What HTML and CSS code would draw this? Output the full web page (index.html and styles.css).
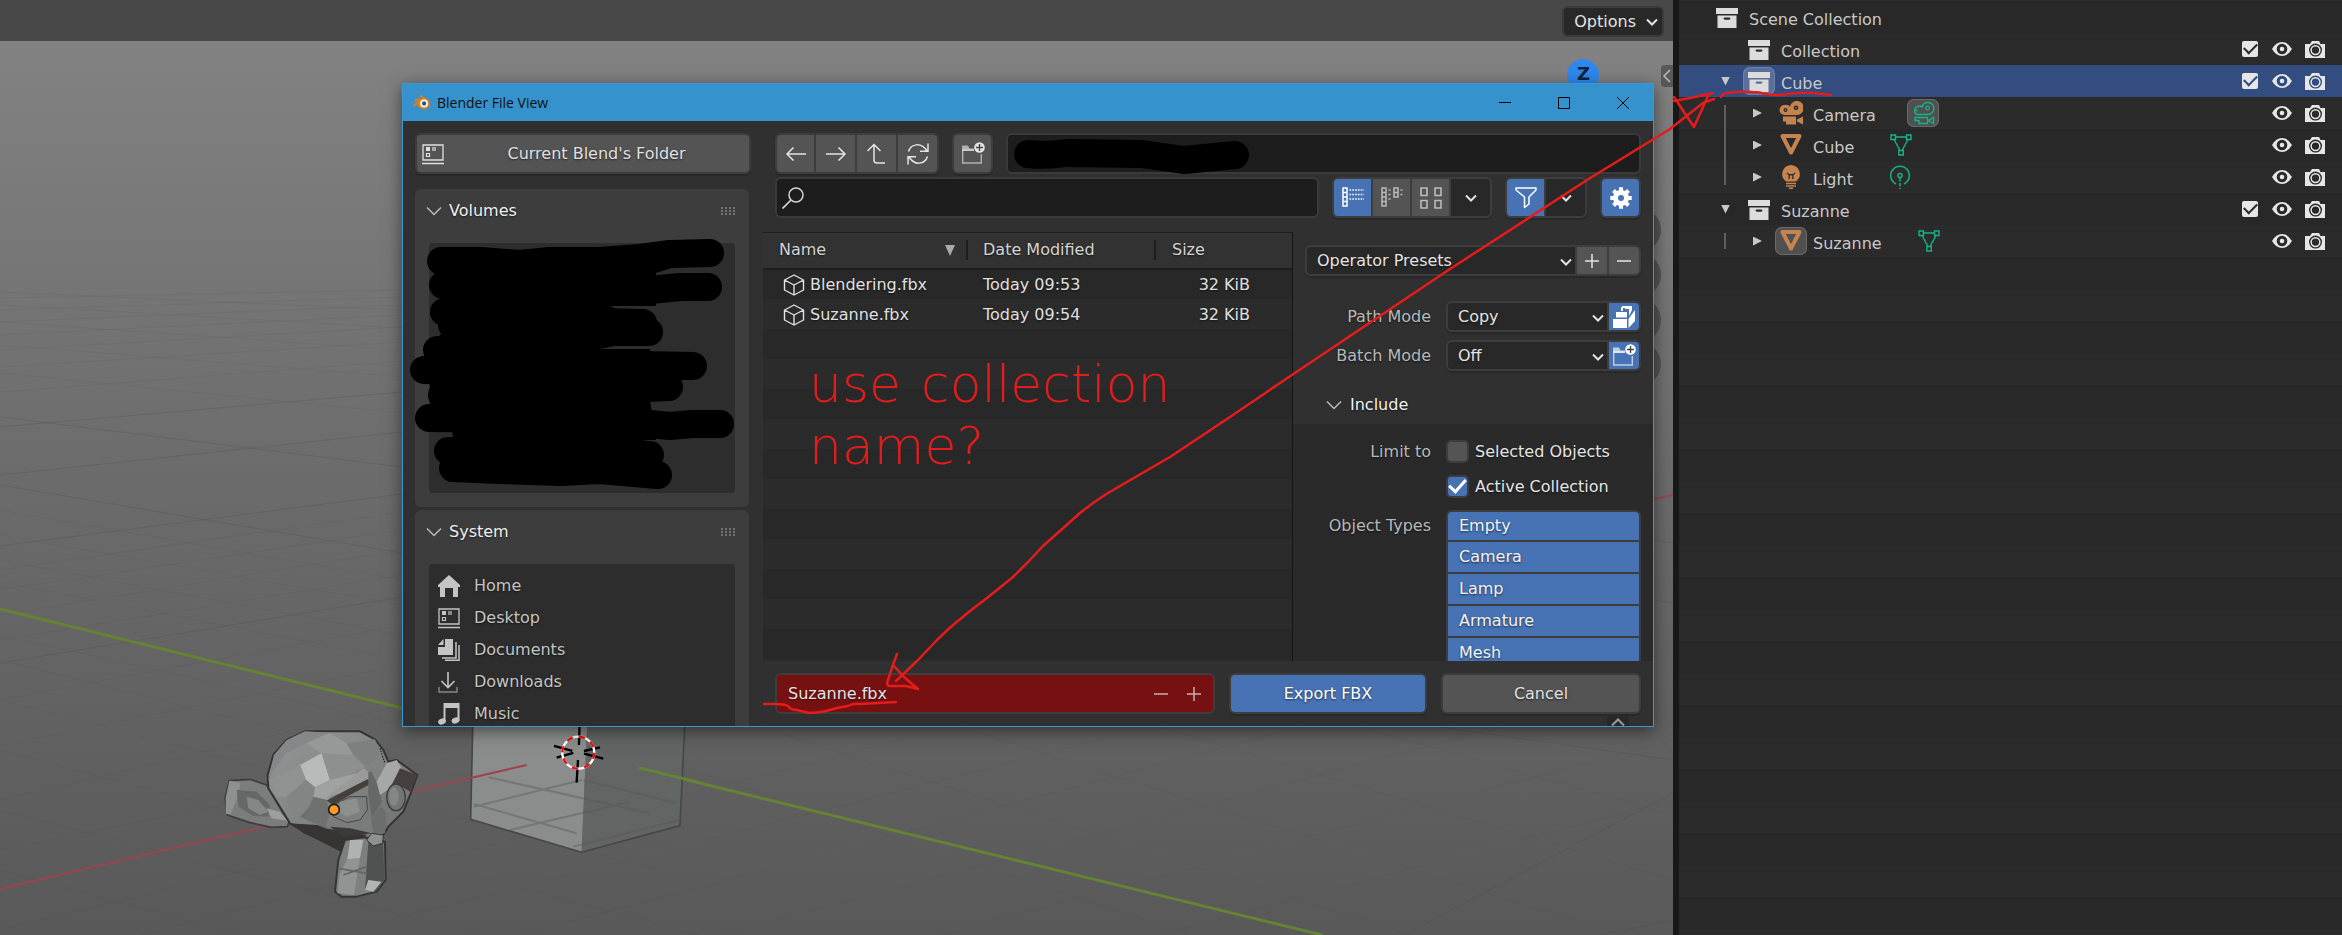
FILE: index.html
```html
<!DOCTYPE html>
<html lang="en">
<head>
<meta charset="utf-8">
<title>Blender</title>
<link rel="stylesheet" href="styles.css">
</head>
<body>
<svg class="defs" aria-hidden="true">
  <symbol id="i-chevron" viewBox="0 0 16 16"><path d="M3 5.500l5 5 5-5" fill="none" stroke="currentColor" stroke-width="2"/></symbol>
  <symbol id="i-fold" viewBox="0 0 16 16"><path d="M1 4.500l7 7 7-7" fill="none" stroke="currentColor" stroke-width="1.500"/></symbol>
  <symbol id="i-grip" viewBox="0 0 16 8"><path d="M1 1h2M5 1h2M9 1h2M13 1h2M1 4h2M5 4h2M9 4h2M13 4h2M1 7h2M5 7h2M9 7h2M13 7h2" stroke="currentColor" stroke-width="1"/></symbol>
  <symbol id="i-desktop" viewBox="0 0 22 22"><path d="M1 2h20v15H1zM0 20.500h22" fill="none" stroke="currentColor" stroke-width="1.300"/><path d="M4 4h4v4H4z" fill="currentColor"/><path d="M10 4h4v4h-4z" fill="currentColor" opacity=".6"/><path d="M4.500 10.500h3v3h-3z" fill="none" stroke="currentColor" stroke-width="1.200"/></symbol>
  <symbol id="i-home" viewBox="0 0 22 22"><path d="M11 0L0 10v2h2v10h5v-9h8v9h5V12h2v-2z" fill="currentColor"/></symbol>
  <symbol id="i-docs" viewBox="0 0 22 22"><path d="M7 0h8v16H0V8h7zM5.500 0v6H0z" fill="currentColor"/><path d="M18 3v16H4M21 6v15.300H7" fill="none" stroke="currentColor" stroke-width="1.500"/></symbol>
  <symbol id="i-download" viewBox="0 0 22 22"><path d="M10 1v15M3.500 10l6.500 6.500 6.500-6.500" fill="none" stroke="currentColor" stroke-width="1.600"/><path d="M1 16v5h18v-5" fill="none" stroke="currentColor" stroke-width="1.400" opacity=".6"/></symbol>
  <symbol id="i-music" viewBox="0 0 22 22"><path d="M5.500 0h16v18h-2V5h-12v13h-2z" fill="currentColor"/><ellipse cx="4" cy="18.500" rx="4" ry="3" fill="currentColor" transform="rotate(-20 4 18.500)"/><ellipse cx="17.500" cy="17.500" rx="4" ry="3" fill="currentColor" transform="rotate(-20 17.500 17.500)"/></symbol>
  <symbol id="i-back" viewBox="0 0 22 22"><path d="M21 11H2M8.500 4.500L2 11l6.500 6.500" fill="none" stroke="currentColor" stroke-width="1.500"/></symbol>
  <symbol id="i-forward" viewBox="0 0 22 22"><path d="M1 11h19M13.500 4.500L20 11l-6.500 6.500" fill="none" stroke="currentColor" stroke-width="1.500"/></symbol>
  <symbol id="i-parent" viewBox="0 0 22 22"><path d="M1.500 8L8 1.500 14.500 8M8 1.500V17q0 3 3 3h8" fill="none" stroke="currentColor" stroke-width="1.500"/></symbol>
  <symbol id="i-refresh" viewBox="0 0 22 22"><path d="M1.500 8.500C4 1 14-1.500 20 8M21 .500V8.300h-8M20.500 13.500C18 21 8 23.500 2 14M1 21.500V13.700h8" fill="none" stroke="currentColor" stroke-width="1.500"/></symbol>
  <symbol id="i-newfolder" viewBox="0 0 24 24"><path d="M1 8h12M1.700 8v13h18.600V12" fill="none" stroke="currentColor" stroke-width="1.400" opacity=".65"/><path d="M1 3.500h6l1.500 3H13V9H1z" fill="currentColor" opacity=".65"/><circle cx="18.500" cy="5.500" r="5.300" fill="currentColor"/><path d="M18.500 2v7M15 5.500h7" stroke="#444" stroke-width="1.400"/></symbol>
  <symbol id="i-search" viewBox="0 0 22 22"><circle cx="14" cy="8" r="7" fill="none" stroke="currentColor" stroke-width="1.500"/><path d="M9 13l-8.500 8.500" stroke="currentColor" stroke-width="1.700"/></symbol>
  <symbol id="i-vlist" viewBox="0 0 22 22"><path d="M1 1h4v4.500H1zM1 5.500h4V10H1zM1 10h4v4.500H1zM1 14.500h4v4.500H1z" fill="none" stroke="currentColor" stroke-width="1.500"/><path d="M7.500 3H22M7.500 7.500H22M7.500 12H22" stroke="currentColor" stroke-width="1.500" stroke-dasharray="1.600 1.200"/></symbol>
  <symbol id="i-hlist" viewBox="0 0 22 22"><path d="M1 1h4v4.500H1zM1 5.500h4V10H1zM1 10h4v4.500H1zM1 14.500h4v4.500H1zM13 1h4v4.500h-4zM13 5.500h4V10h-4z" fill="none" stroke="currentColor" stroke-width="1.500"/><path d="M7.500 3h2M7.500 7.500h2M7.500 12h2M19.500 3h2M19.500 7.500h2" stroke="currentColor" stroke-width="1.500"/></symbol>
  <symbol id="i-thumbs" viewBox="0 0 22 22"><path d="M1 1h6v7.500H1zM15 1h6v7.500h-6zM1 13.500h6V21H1zM15 13.500h6V21h-6z" fill="none" stroke="currentColor" stroke-width="1.600"/></symbol>
  <symbol id="i-filter" viewBox="0 0 22 22"><path d="M1 1h20v2l-7 7v7l-4.500 3.500V10L1 3z" fill="none" stroke="currentColor" stroke-width="1.500" stroke-linejoin="round"/></symbol>
  <symbol id="i-gear" viewBox="0 0 22 22"><circle cx="11" cy="11" r="5.500" fill="none" stroke="currentColor" stroke-width="5"/><path d="M11 .300v4M11 17.700v4M.300 11h4M17.700 11h4M3.500 3.500l3 3M15.500 15.500l3 3M18.500 3.500l-3 3M6.500 15.500l-3 3" stroke="currentColor" stroke-width="4"/></symbol>
  <symbol id="i-cube" viewBox="0 0 22 22"><path d="M11 1l9.500 5v10L11 21l-9.500-5V6zM1.500 6l9.500 5 9.500-5M11 11v10" fill="none" stroke="currentColor" stroke-width="1.400" stroke-linejoin="round"/></symbol>
  <symbol id="i-pack" viewBox="0 0 22 22"><path d="M0 13h14v9H0zM3 6h11v5.500H3zM9 0h10v2H9zM8 1h2v4H8zM15.500 13L22 4v11l-6.500 7zM19 0v4l-3 6V3h-4V1z" fill="currentColor"/></symbol>
  <symbol id="i-plus" viewBox="0 0 16 16"><path d="M8 1v14M1 8h14" stroke="currentColor" stroke-width="1.500"/></symbol>
  <symbol id="i-minus" viewBox="0 0 16 16"><path d="M1 8h14" stroke="currentColor" stroke-width="1.500"/></symbol>
  <symbol id="i-collection" viewBox="0 0 22 20"><path d="M0 0h22v6H0z" fill="currentColor"/><path fill-rule="evenodd" d="M1.500 7.500h19V20h-19zM9 9.500q-1.500 0-1.500 1t1.500 1.200h4q1.500-.200 1.500-1.200t-1.500-1z" fill="currentColor"/></symbol>
  <symbol id="i-camera" viewBox="0 0 24 24"><path fill-rule="evenodd" d="M5.500 4A5 5 0 0 0 5.500 14H18a7 7 0 1 0-7-8.500A5 5 0 0 0 5.500 4zM6.500 7a2 2 0 1 1 0 4 2 2 0 0 1 0-4zM17 4.500a2.300 2.300 0 1 1 0 4.600 2.300 2.300 0 0 1 0-4.600z" fill="currentColor"/><circle cx="6.500" cy="9" r=".8" fill="currentColor"/><circle cx="17" cy="6.800" r=".8" fill="currentColor"/><path d="M4 15.500h13v8H7v-3H4zM18 18.500l6-3v8l-6-3z" fill="currentColor"/></symbol>
  <symbol id="i-camdata" viewBox="0 0 24 24"><path d="M5.500 13.500H17a6 6 0 1 0-6-7.500 4.500 4.500 0 1 0-5.500 7.500z" fill="none" stroke="currentColor" stroke-width="1.500"/><circle cx="16.500" cy="7" r="1.800" fill="none" stroke="currentColor" stroke-width="1.200"/><circle cx="6" cy="9.500" r="1" fill="currentColor"/><path d="M4 16.500h12.500v6H8v-3H4zM17.500 19.500l5-3v6z" fill="none" stroke="currentColor" stroke-width="1.400"/></symbol>
  <symbol id="i-mesh" viewBox="0 0 22 22"><path d="M2.500 2h17L11 18.500z" fill="none" stroke="currentColor" stroke-width="4" stroke-linejoin="round"/></symbol>
  <symbol id="i-meshdata" viewBox="0 0 22 22"><path d="M1 1h4.500v4.500H1zM16.500 1H21v4.500h-4.500zM8.800 16.500h4.500V21H8.800zM5.500 3h11M4 5.500l6 11M18 5.500l-6 11" fill="none" stroke="currentColor" stroke-width="1.400"/></symbol>
  <symbol id="i-light" viewBox="0 0 20 24"><path fill-rule="evenodd" d="M10 0a9 9 0 0 1 6.500 15l-1.500 1.500H5L3.500 15A9 9 0 0 1 10 0zM5.500 8.500l2 1.500v4h1.300v-3.500h2.400V14h1.300v-4l2-1.500-.7-1-2 1.600H8.200l-2-1.600z" fill="currentColor"/><path d="M5 18.500h10M5 21h10M8 23.200h4" stroke="currentColor" stroke-width="1.500"/></symbol>
  <symbol id="i-lightdata" viewBox="0 0 22 24"><path d="M7 19A9.300 9.300 0 1 1 15 19" fill="none" stroke="currentColor" stroke-width="1.500"/><circle cx="11" cy="10.500" r="2" fill="none" stroke="currentColor" stroke-width="1.500"/><path d="M11 13v11" stroke="currentColor" stroke-width="1.500" stroke-dasharray="3.500 1.500"/></symbol>
  <symbol id="i-eye" viewBox="0 0 20 14"><path fill-rule="evenodd" d="M0 7Q4 0 10 0t10 7q-4 7-10 7T0 7zM10 1.700a5.300 5.300 0 1 0 0 10.600 5.300 5.300 0 0 0 0-10.600zM10 4.700a2.300 2.300 0 1 1 0 4.600 2.300 2.300 0 0 1 0-4.600z" fill="currentColor"/></symbol>
  <symbol id="i-photo" viewBox="0 0 20 17"><path fill-rule="evenodd" d="M0 3h5l2-3h7l1.500 3H20v14H0zM10.500 2.600a6.500 6.500 0 1 0 0 13 6.500 6.500 0 0 0 0-13z" fill="currentColor"/><circle cx="10.500" cy="9.100" r="4.400" fill="none" stroke="currentColor" stroke-width="1.500"/></symbol>
  <symbol id="i-blender" viewBox="0 0 20 16"><path d="M1 11.500l9-7M3 5h9M8.500.800L16 6" stroke="#e87d0d" stroke-width="2.200" stroke-linecap="round"/><ellipse cx="12" cy="9.300" rx="7" ry="6.200" fill="#e87d0d"/><circle cx="12.300" cy="9.100" r="4.300" fill="#fff"/><circle cx="12.300" cy="9.100" r="2.400" fill="#265787"/></symbol>
</svg>

<main class="app">
  <section class="viewport" aria-label="3D Viewport">
    <header class="viewbar"><button class="options" type="button">Options <svg class="chev"><use href="#i-chevron"/></svg></button></header>
    <svg class="scene" viewBox="0 41 1673 894" preserveAspectRatio="none" aria-hidden="true">
      <defs>
        <linearGradient id="sky" x1="0" y1="0" x2="0" y2="1"><stop offset="0" stop-color="#828282"/><stop offset=".5" stop-color="#6b6b6b"/><stop offset="1" stop-color="#595959"/></linearGradient>
        <linearGradient id="head" x1="0" y1="0" x2="1" y2="1"><stop offset="0" stop-color="#969898"/><stop offset="1" stop-color="#6c6e6e"/></linearGradient>
      </defs>
      <rect y="41" width="1673" height="894" fill="url(#sky)"/>
      <g fill="none" stroke="#4c4c4c" stroke-opacity=".25" stroke-width="1">
        <path d="M0 663L402 597M0 546L402 494M0 475L402 432M0 427L402 392M0 485L402 553M0 417L402 467"/>
        <path d="M1404 935L1673 793M1440 727L1673 760M1600 935L1673 920M1654 540L1673 543M1654 600L1673 603"/>
      </g>
      <g fill="none" stroke="#4c4c4c" stroke-opacity=".1" stroke-width="1">
        <path d="M0 392L402 361M0 367L402 342M0 373L402 413M0 345L402 377M0 350L402 327M0 335L402 315M0 322L402 305M0 310L402 297M0 322L402 350M0 305L402 328M0 292L402 310M0 298L402 290"/>
        <path d="M0 560L402 635M0 582L402 660M0 535L402 605M0 510L402 580M0 635L402 725M0 660L560 800M0 700L660 870M0 750L700 935M0 810L480 935M0 870L240 935M0 640L402 575M0 615L402 550M0 590L402 530M0 570L402 512M0 700L402 625M0 745L402 665M0 800L402 705M0 850L640 720M0 930L700 760M140 935L900 740M330 935L1100 740M520 935L1300 727M720 935L1500 727M940 935L1673 740M1160 935L1673 800M560 727L1190 935M760 727L1410 935M960 727L1620 935M1160 727L1673 880M1360 727L1673 815"/>
      </g>
      <path d="M0 889L525 765M1654 499L1673 495" stroke="#9b4450" stroke-width="2" fill="none"/>
      <path d="M0 609L402 708M638 768L1322 935" stroke="#648334" stroke-width="3" fill="none"/>
      <g transform="translate(200 700) scale(.3333)" stroke-linejoin="round">
        <path d="M822 0L812 358 1145 457 1165 0z" fill="#8b8d8c"/>
        <path d="M1165 0L1145 457 1440 377 1460 0z" fill="#636564"/>
        <path d="M820 0L812 358 1145 457 1440 377 1458 0" fill="none" stroke="#474747" stroke-width="5"/>
        <path d="M822 312L1130 400M866 232L1350 340M822 320L1145 240M930 390L1290 305M1120 440L1440 360M1150 240L1430 310" stroke="#565656" stroke-opacity=".4" stroke-width="6" fill="none"/>
        <path d="M812 234L980 195" stroke="#9b4450" stroke-width="6"/>
        <path d="M1315 203L1500 248" stroke="#648334" stroke-width="8"/>
        <path d="M1139 70L1137 135M1134 180L1130 248M1062 138L1117 153M1070 173L1120 159M1152 153L1200 142M1152 161L1210 176" stroke="#000" stroke-width="7"/>
        <circle cx="1135" cy="158" r="48" fill="none" stroke="#fff" stroke-width="7"/>
        <circle cx="1135" cy="158" r="48" fill="none" stroke="#f00c0c" stroke-width="7" stroke-dasharray="19 18.700"/>

        <g stroke="none">
          <path d="M88 242L150 238 200 255 250 340 268 365 262 380 215 382 150 368 82 345 75 295z" fill="#7b7d7d" stroke="#3c3c3c" stroke-width="5"/>
          <path d="M88 242L122 250 110 300 92 342 78 342 77 295z" fill="#8f9191"/>
          <path d="M110 270L170 275 210 315 205 350 160 348 115 320z" fill="#666868"/>
          <path d="M140 290L175 300 205 335 180 345 145 325z" fill="#858787"/>
          <path d="M200 325L240 335 262 362 215 355z" fill="#9c9e9e"/>
          <path d="M315 94L480 94 525 118 550 150 565 185 590 180 652 225 632 280 610 335 565 380 550 405 420 450 340 410 270 370 205 265 203 225 220 165 260 120z" fill="url(#head)" stroke="#333" stroke-width="6"/>
          <path d="M270 370L350 375 470 400 500 405 480 430 420 450 380 430 310 400z" fill="#373534"/>
          <path d="M315 94L390 98 320 130 260 160 222 210 205 240 222 165 260 120z" fill="#858888"/>
          <path d="M390 98L440 130 460 165 370 165 320 130z" fill="#979999"/>
          <path d="M440 130L525 118 540 160 505 200 460 165z" fill="#7e8080"/>
          <path d="M300 195L365 160 390 240 345 262 318 240z" fill="#b8baba"/>
          <path d="M365 160L460 165 495 200 450 225 390 240z" fill="#8e9090"/>
          <path d="M205 240L300 195 318 240 260 290 230 290z" fill="#909292"/>
          <path d="M260 290L318 240 345 262 328 320 300 350 270 345z" fill="#838585"/>
          <path d="M345 262L390 240 450 225 485 215 380 300 340 290z" fill="#a0a2a2"/>
          <path d="M328 320L340 290 380 300 390 340 375 385 300 350z" fill="#6f7171"/>
          <path d="M380 302L500 235 515 250 450 285 400 315z" fill="#46403d"/>
          <path d="M370 298L490 205 512 220 508 235 420 280z" fill="#999b9b"/>
          <path d="M505 215L515 215 540 270 545 310 515 350 505 285z" fill="#666868"/>
          <path d="M560 190L590 180 605 205 570 265 540 285 530 245z" fill="#a6a8a8"/>
          <path d="M600 205L652 225 630 275 590 250 570 265z" fill="#45403d"/>
          <ellipse cx="588" cy="292" rx="28" ry="40" fill="#737575" stroke="#3b3b3b" stroke-width="4"/>
          <ellipse cx="582" cy="290" rx="14" ry="28" fill="#858787"/>
          <path d="M400 315L450 290 500 290 502 330 480 360 440 368 400 350z" fill="#7d7f7f" stroke="#444" stroke-width="3"/>
          <path d="M420 305L470 295 480 335 440 350 415 335z" fill="#8d8f8f"/>
          <path d="M375 385L400 352 445 372 480 362 515 345 520 400 470 400z" fill="#7a7c7c"/>
          <path d="M390 380L450 385 515 400 430 410z" fill="#3c3a39"/>
          <path d="M520 400L512 345 545 320 560 340 555 400z" fill="#6c6e6e"/>
          <path d="M435 420L490 412 555 425 557 540 530 575 470 590 425 590 405 575 415 480z" fill="#7d7f7f" stroke="#343434" stroke-width="6"/>
          <path d="M450 420L490 420 480 475 442 478z" fill="#b0b2b2"/>
          <path d="M442 478L480 475 462 585 412 580 420 520z" fill="#929494"/>
          <path d="M505 425L550 425 553 540 525 575 495 570z" fill="#505252"/>
          <path d="M495 570L505 540 545 545 520 575z" fill="#b2b4b4"/>
          <path d="M500 420L515 400 550 405 548 430 520 438z" fill="#8f9191" stroke="#333" stroke-width="3"/>
          <path d="M415 505L500 520M430 525L500 500" stroke="#666" stroke-width="5"/>
          <path d="M540 145L555 190" stroke="#222" stroke-width="4" stroke-dasharray="4 4"/>
        </g>
        <circle cx="402" cy="329" r="16" fill="#ff9a26" stroke="#1c1c1c" stroke-width="5"/>
      </g>
      <g fill="#555"><circle cx="1639" cy="230" r="22"/><circle cx="1639" cy="275" r="22"/><circle cx="1639" cy="320" r="22"/><circle cx="1639" cy="364" r="22"/></g>
      <circle cx="1583" cy="75" r="16" fill="#2f88ee"/>
    </svg>
    <span class="axis-z">Z</span>
    <button class="side-tab" type="button" aria-label="Show sidebar"><svg viewBox="0 0 12 22"><path d="M9 5l-6 6 6 6" fill="none" stroke="#bbb" stroke-width="1.500"/></svg></button>

    <section class="dialog" role="dialog" aria-label="Blender File View">
      <header class="titlebar">
        <svg class="logo"><use href="#i-blender"/></svg>
        <h1>Blender File View</h1>
        <button type="button" aria-label="Minimize"><svg viewBox="0 0 12 12"><path d="M0 5.500h12" stroke="#000"/></svg></button>
        <button type="button" aria-label="Maximize"><svg viewBox="0 0 12 12"><path d="M.500 .500h11v11H.500z" fill="none" stroke="#000"/></svg></button>
        <button type="button" aria-label="Close"><svg viewBox="0 0 12 12"><path d="M0 0l12 12M12 0L0 12" stroke="#000"/></svg></button>
      </header>
      <div class="body">
        <aside class="sidebar">
          <button class="btn folder" type="button"><svg class="ic"><use href="#i-desktop"/></svg><span>Current Blend's Folder</span></button>
          <section class="panel">
            <h2><svg class="fold"><use href="#i-fold"/></svg>Volumes<svg class="grip"><use href="#i-grip"/></svg></h2>
            <ul class="places volumes"></ul>
          </section>
          <section class="panel">
            <h2><svg class="fold"><use href="#i-fold"/></svg>System<svg class="grip"><use href="#i-grip"/></svg></h2>
            <ul class="places">
              <li><svg class="ic"><use href="#i-home"/></svg>Home</li>
              <li><svg class="ic"><use href="#i-desktop"/></svg>Desktop</li>
              <li><svg class="ic"><use href="#i-docs"/></svg>Documents</li>
              <li><svg class="ic"><use href="#i-download"/></svg>Downloads</li>
              <li><svg class="ic"><use href="#i-music"/></svg>Music</li>
            </ul>
          </section>
        </aside>
        <div class="main">
          <div class="toolbar">
            <div class="bar">
              <div class="group wide">
                <button type="button" aria-label="Back"><svg class="ic"><use href="#i-back"/></svg></button>
                <button type="button" aria-label="Forward"><svg class="ic"><use href="#i-forward"/></svg></button>
                <button type="button" aria-label="Parent directory"><svg class="ic"><use href="#i-parent"/></svg></button>
                <button type="button" aria-label="Refresh"><svg class="ic"><use href="#i-refresh"/></svg></button>
              </div>
              <div class="group"><button type="button" aria-label="New folder"><svg class="ic big"><use href="#i-newfolder"/></svg></button></div>
              <input class="field grow" type="text" aria-label="Path">
            </div>
            <div class="bar">
              <label class="field grow search"><svg class="ic"><use href="#i-search"/></svg><input type="text" aria-label="Search"></label>
              <div class="group dim">
                <button class="on" type="button" aria-label="Vertical list"><svg class="ic"><use href="#i-vlist"/></svg></button>
                <button type="button" aria-label="Horizontal list"><svg class="ic"><use href="#i-hlist"/></svg></button>
                <button type="button" aria-label="Thumbnails"><svg class="ic"><use href="#i-thumbs"/></svg></button>
                <button class="dark" type="button" aria-label="Display settings"><svg class="chev"><use href="#i-chevron"/></svg></button>
              </div>
              <div class="group">
                <button class="on" type="button" aria-label="Filter"><svg class="ic"><use href="#i-filter"/></svg></button>
                <button class="dark" type="button" aria-label="Filter settings"><svg class="chev"><use href="#i-chevron"/></svg></button>
              </div>
              <div class="group"><button class="on" type="button" aria-label="Options panel"><svg class="ic"><use href="#i-gear"/></svg></button></div>
            </div>
          </div>
          <div class="split">
            <div class="files">
              <table>
                <thead><tr><th class="c-name"><div>Name <svg viewBox="0 0 10 11"><path d="M0 0h10L5 11z" fill="#aaa"/></svg></div></th><th class="c-date"><div>Date Modified</div></th><th class="c-size"><div>Size</div></th></tr></thead>
                <tbody>
                  <tr><td><svg class="ic"><use href="#i-cube"/></svg>Blendering.fbx</td><td>Today 09:53</td><td>32 KiB</td></tr>
                  <tr><td><svg class="ic"><use href="#i-cube"/></svg>Suzanne.fbx</td><td>Today 09:54</td><td>32 KiB</td></tr>
                </tbody>
              </table>
            </div>
            <div class="params">
              <div class="top">
                <div class="combo presets"><span class="sel"><select aria-label="Operator Presets"><option>Operator Presets</option></select><svg class="chev"><use href="#i-chevron"/></svg></span><button type="button" aria-label="Add preset"><svg class="sm"><use href="#i-plus"/></svg></button><button type="button" aria-label="Remove preset"><svg class="sm"><use href="#i-minus"/></svg></button></div>
                <div class="prop"><label for="pm">Path Mode</label><div class="combo"><span class="sel"><select id="pm"><option>Copy</option></select><svg class="chev"><use href="#i-chevron"/></svg></span><button class="on" type="button" aria-label="Embed textures"><svg class="ic"><use href="#i-pack"/></svg></button></div></div>
                <div class="prop"><label for="bm">Batch Mode</label><div class="combo"><span class="sel"><select id="bm"><option>Off</option></select><svg class="chev"><use href="#i-chevron"/></svg></span><button class="on" type="button" aria-label="Batch own directory"><svg class="ic big"><use href="#i-newfolder"/></svg></button></div></div>
              </div>
              <h2 class="sub"><svg class="fold"><use href="#i-fold"/></svg>Include</h2>
              <div class="include">
                <div class="prop"><span>Limit to</span><label class="check"><input type="checkbox">Selected Objects</label></div>
                <div class="prop"><span></span><label class="check"><input type="checkbox" checked>Active Collection</label></div>
                <div class="prop types"><span>Object Types</span><div class="stack">
                  <button type="button" aria-pressed="true">Empty</button><button type="button" aria-pressed="true">Camera</button><button type="button" aria-pressed="true">Lamp</button><button type="button" aria-pressed="true">Armature</button><button type="button" aria-pressed="true">Mesh</button>
                </div></div>
              </div>
            </div>
          </div>
          <footer class="execute">
            <div class="filename"><input type="text" value="Suzanne.fbx" aria-label="File name"><button type="button" aria-label="Decrement"><svg class="sm"><use href="#i-minus"/></svg></button><button type="button" aria-label="Increment"><svg class="sm"><use href="#i-plus"/></svg></button></div>
            <button class="btn primary" type="button">Export FBX</button>
            <button class="btn cancel" type="button">Cancel</button>
            <span class="region-tab"><svg viewBox="0 0 14 8"><path d="M1 7.500l6-6 6 6" fill="none" stroke="#999" stroke-width="2"/></svg></span>
          </footer>
        </div>
      </div>
    </section>
  </section>
  <div class="divider"></div>
  <aside class="outliner" aria-label="Outliner">
    <ul>
      <li><div class="row l0"><span class="tri"></span><span class="obj"><svg class="coll"><use href="#i-collection"/></svg></span><span class="name">Scene Collection</span></div></li>
      <li><div class="row l1"><span class="tri"></span><span class="obj"><svg class="coll"><use href="#i-collection"/></svg></span><span class="name">Collection</span><span class="toggles"><input type="checkbox" checked aria-label="Include Collection"><svg class="eye"><use href="#i-eye"/></svg><svg class="photo"><use href="#i-photo"/></svg></span></div></li>
      <li><div class="row l1 selected"><span class="tri down"></span><span class="obj active"><svg class="coll"><use href="#i-collection"/></svg></span><span class="name">Cube</span><span class="toggles"><input type="checkbox" checked aria-label="Include Cube"><svg class="eye"><use href="#i-eye"/></svg><svg class="photo"><use href="#i-photo"/></svg></span></div>
        <ul>
          <li><div class="row l2"><span class="tri right"></span><span class="obj orange"><svg class="cam"><use href="#i-camera"/></svg></span><span class="name">Camera</span><span class="data active"><svg class="cam"><use href="#i-camdata"/></svg></span><span class="toggles"><svg class="eye"><use href="#i-eye"/></svg><svg class="photo"><use href="#i-photo"/></svg></span></div></li>
          <li><div class="row l2"><span class="tri right"></span><span class="obj orange"><svg class="ic"><use href="#i-mesh"/></svg></span><span class="name">Cube</span><span class="data"><svg class="ic"><use href="#i-meshdata"/></svg></span><span class="toggles"><svg class="eye"><use href="#i-eye"/></svg><svg class="photo"><use href="#i-photo"/></svg></span></div></li>
          <li><div class="row l2"><span class="tri right"></span><span class="obj orange"><svg class="cam"><use href="#i-light"/></svg></span><span class="name">Light</span><span class="data"><svg class="cam"><use href="#i-lightdata"/></svg></span><span class="toggles"><svg class="eye"><use href="#i-eye"/></svg><svg class="photo"><use href="#i-photo"/></svg></span></div></li>
        </ul></li>
      <li><div class="row l1"><span class="tri down"></span><span class="obj"><svg class="coll"><use href="#i-collection"/></svg></span><span class="name">Suzanne</span><span class="toggles"><input type="checkbox" checked aria-label="Include Suzanne"><svg class="eye"><use href="#i-eye"/></svg><svg class="photo"><use href="#i-photo"/></svg></span></div>
        <ul>
          <li><div class="row l2"><span class="tri right"></span><span class="obj orange active"><svg class="ic"><use href="#i-mesh"/></svg></span><span class="name">Suzanne</span><span class="data"><svg class="ic"><use href="#i-meshdata"/></svg></span><span class="toggles"><svg class="eye"><use href="#i-eye"/></svg><svg class="photo"><use href="#i-photo"/></svg></span></div></li>
        </ul></li>
    </ul>
  </aside>

  <div class="note"><p><span>use</span><span>collection</span></p><p><span>name?</span></p></div>
  <svg class="markup" viewBox="0 0 2342 935" preserveAspectRatio="none" aria-hidden="true">
    <g fill="none" stroke="#e51c1c" stroke-width="2.500" stroke-linecap="round" stroke-linejoin="round">
      <path d="M896 681L917 661 937 640Q945 632 953 625L970 611 987 598 1013 577 1028 562 1043 546 1061 530 1080 513Q1095 501 1108 493L1170 457 1227 419 1280 383 1447 271 1587 180 1670 129 1703 103 1714 99"/>
      <path d="M1674 101L1690 98 1713 93M1708 96L1694 127 1674 97"/>
      <path d="M897 654L893 665 887 683Q887 686 890 686L906 686 918 689 904 677 893 665"/>
      <path d="M764 704L775 704Q785 704 788 706 791 710 797 710L809 713Q817 713 826 711L837 708 848 706Q854 703 860 704L896 702"/>
      <path d="M1721 97Q1722 94 1727 93 1740 91 1753 92 1760 92 1765 94 1777 96 1787 94 1803 92 1815 93L1831 95"/>
    </g>
    <g fill="none" stroke="#000" stroke-width="28" stroke-linecap="round" stroke-linejoin="round">
      <path d="M441 261L480 261 520 264 550 261 600 261 640 258 670 254 710 253"/>
      <path d="M443 285L600 291 650 290 680 287 708 287M444 312L600 322 643 323M452 325L600 332 649 332M437 350L560 364 640 365 693 366M424 370L560 375M442 395L600 390 669 387M429 418L620 420 650 424 670 426 692 424 720 424M448 451L600 452 650 455M453 468L500 470 560 472 600 470 658 475"/>
      <path d="M1028 154Q1045 156 1067 153L1142 154 1184 160 1235 155"/>
    </g>
    <path d="M440 262H690L656 273V306H610L650 325 655 338 600 349H650V400L656 440H644L650 455V475H460L450 420 430 400V350L450 320z"/>
  </svg>
</main>
</body>
</html>
```
FILE: styles.css
```css
* { box-sizing: border-box; }
body { margin: 0; background: #181818; color: #d4d4d4; font: 16px/20px "DejaVu Sans", sans-serif; overflow: hidden; }
button, input, select { font: inherit; color: inherit; margin: 0; border: 0; padding: 0; background: none; text-shadow: inherit; }
ul { list-style: none; margin: 0; padding: 0; }
h1, h2, p { margin: 0; font-weight: 400; }
h2 { font-size: 16px; }
svg { display: block; flex: none; }
.defs { position: absolute; width: 0; height: 0; }
.ic { width: 22px; height: 22px; }
.ic.big, .cam { width: 24px; height: 24px; }
.sm { width: 16px; height: 16px; }
.chev { width: 16px; height: 16px; }
.fold { width: 16px; height: 16px; color: #bbb; }

.app { position: relative; display: grid; grid-template-columns: 1673fr 6px 663fr; height: 100vh; }
.divider { background: #181818; }

/* 3D viewport */
.viewport { position: relative; display: flex; flex-direction: column; min-width: 0; min-height: 0; overflow: hidden; }
.viewbar { display: flex; justify-content: flex-end; height: 41px; padding: 6px 9px 4px 0; background: #484848; }
.options { display: flex; align-items: center; gap: 8px; padding: 0 2px 0 10px; background: #282828; border: 2px solid #3a3a3a; border-radius: 6px; color: #e4e4e4; }
.scene { flex: 1; width: 100%; min-height: 0; }
.axis-z { position: absolute; right: 83px; top: 64px; font: bold 18px/20px "DejaVu Sans", sans-serif; color: #12233f; }
.side-tab { position: absolute; right: 0; top: 65px; width: 12px; height: 22px; background: #595959; border-radius: 4px 0 0 4px; }

/* file browser window */
.dialog { position: absolute; left: 402px; right: 19px; top: 83px; bottom: 208px; display: flex; flex-direction: column; border: 1px solid #3c97d3; background: #303030; box-shadow: 0 4px 16px rgba(0,0,0,.5); text-shadow: 0 1px 2px rgba(0,0,0,.6); }
.titlebar { display: flex; align-items: center; height: 37px; padding: 0 1px 0 10px; background: #3692cc; color: #101010; text-shadow: none; }
.titlebar h1 { flex: 1; margin-left: 6px; font: 14px/20px "Open Sans", "Noto Sans", sans-serif; }
.titlebar .logo { width: 18px; height: 15px; }
.titlebar button { display: flex; justify-content: center; width: 59px; }
.titlebar button svg { width: 12px; height: 12px; }
.body { flex: 1; display: flex; min-height: 0; }

.sidebar { width: 348px; padding: 12px 0 0 12px; overflow: hidden; }
.btn { height: 41px; border: 2px solid #3d3d3d; border-radius: 6px; background: #545454; color: #e0e0e0; box-shadow: 0 2px 1px rgba(0,0,0,.15); }
.folder { display: flex; align-items: center; width: 100%; padding: 0 5px; }
.folder span { flex: 1; padding-left: 5px; }
.panel { width: calc(100% - 2px); margin-bottom: 3px; padding: 0 14px 14px; border-radius: 6px; background: #3d3d3d; }
.folder + .panel { margin-top: 15px; }
.panel h2 { display: flex; align-items: center; gap: 7px; height: 42px; margin: 0 -1px 12px -3px; padding-top: 1px; color: #f0f0f0; }
.grip { width: 16px; height: 8px; margin-left: auto; color: #aaa; }
.places { padding: 6px 9px; border-radius: 4px; background: #2d2d2d; color: #c4c4c4; }
.places li { display: flex; align-items: center; gap: 14px; height: 32px; }
.volumes { height: 250px; }

.main { flex: 1; display: flex; flex-direction: column; min-width: 0; padding-left: 12px; }
.toolbar { display: grid; gap: 3px; padding: 12px 12px 14px; }
.bar { display: flex; gap: 13px; height: 41px; }
.grow { flex: 1; min-width: 0; }
.field { border: 2px solid #3a3a3a; border-radius: 6px; background: #1d1d1d; }
.search { display: flex; align-items: center; padding: 0 5px; gap: 6px; }
.search input { flex: 1; min-width: 0; }
.group { display: flex; gap: 2px; padding: 2px; border-radius: 6px; background: #3d3d3d; box-shadow: 0 2px 1px rgba(0,0,0,.15); }
.group button { display: flex; align-items: center; justify-content: center; width: 37px; background: #545454; color: #e4e4e4; }
.group.wide button + button, .group .dark { width: 39px; }
.group button:first-child { border-radius: 4px 0 0 4px; }
.group button:last-child { border-radius: 0 4px 4px 0; }
.group button:only-child { border-radius: 4px; }
.dim button { color: #bbb; }
.group .dark { background: #282828; color: #e4e4e4; }
.group .on, .combo .on { background: #4772b3; color: #fff; }

.split { flex: 1; display: flex; min-height: 0; overflow: hidden; }
.files { flex: 1; border-right: 1px solid #151515; background: repeating-linear-gradient(#282828 0 30px, #2b2b2b 30px 60px) 0 37px; }
table { width: 100%; table-layout: fixed; border-collapse: collapse; }
th, td { padding: 0; font-weight: 400; text-align: left; }
thead tr { height: 36px; }
th { background: #323232; border-top: 1px solid #1e1e1e; border-bottom: 2px solid #1e1e1e; }
th div { display: flex; align-items: center; justify-content: space-between; height: 20px; padding: 0 11px 0 15px; border-right: 2px solid #1e1e1e; }
th svg { width: 10px; height: 11px; }
.c-name { width: 205px; }
.c-date { width: 188px; }
.c-size div { border: 0; padding-left: 16px; }
.c-name div { padding-left: 16px; }
tbody tr { height: 30px; }
td { padding-left: 15px; color: #e0e0e0; }
td:first-child { display: flex; align-items: center; gap: 5px; height: 30px; padding-left: 20px; }
td:last-child { padding-right: 42px; text-align: right; }

.params { width: 360px; overflow: hidden; }
.top { display: grid; gap: 8px; padding: 13px 12px 15px; }
.presets { margin-bottom: 17px; }
.combo { display: flex; gap: 2px; height: 31px; padding: 2px; border-radius: 6px; background: #3d3d3d; box-shadow: 0 2px 1px rgba(0,0,0,.15); }
.sel { position: relative; flex: 1; min-width: 0; display: flex; border-radius: 4px 0 0 4px; background: #282828; color: #e4e4e4; }
.sel select { flex: 1; min-width: 0; padding: 0 10px; appearance: none; }
.sel .chev { position: absolute; right: 1px; top: 7px; pointer-events: none; }
.combo button { display: flex; align-items: center; justify-content: center; width: 30px; background: #545454; color: #e4e4e4; }
.combo button:last-child { border-radius: 0 4px 4px 0; }
.prop { display: grid; grid-template-columns: 126px 1fr; gap: 15px; align-items: center; }
.prop > :first-child { text-align: right; color: #b8b8b8; white-space: nowrap; }
.sub { display: flex; align-items: center; gap: 8px; height: 38px; padding-left: 33px; color: #f0f0f0; }
.include { display: grid; gap: 12px; padding: 16px 12px 0; background: #2a2a2a; }
.check { display: flex; align-items: center; gap: 6px; height: 23px; color: #e4e4e4; }
.check input { appearance: none; display: grid; width: 23px; height: 23px; border: 2px solid #3d3d3d; border-radius: 5px; background: #545454; }
.check input:checked { background: #4772b3; }
.check input:checked::before { content: ""; place-self: center; width: 14px; height: 7px; margin-bottom: 5px; border: solid #fff; border-width: 0 0 3px 3px; rotate: -48deg; }
.types { align-items: start; }
.types > :first-child { padding-top: 6px; }
.stack { display: grid; gap: 2px; padding: 2px; border-radius: 6px; background: #3d3d3d; }
.stack button { height: 30px; padding: 0 11px; background: #4772b3; color: #f4f4f4; text-align: left; }
.stack button:first-child { height: 28px; border-radius: 4px 4px 0 0; }

.execute { position: relative; display: flex; gap: 14px; padding: 12px; }
.filename { flex: 1; display: flex; align-items: center; gap: 17px; min-width: 0; height: 41px; padding: 0 11px; border: 2px solid #3d3d3d; border-radius: 6px; background: #771111; color: #e4e4e4; }
.filename input { flex: 1; min-width: 0; }
.filename button { opacity: .75; }
.primary { width: 198px; background: #4772b3; color: #fff; }
.cancel { width: 200px; }
.region-tab { position: absolute; right: 24px; bottom: 0; width: 22px; height: 10px; padding: 2px 4px 0; border-radius: 4px 4px 0 0; background: #282828; }
.region-tab svg { width: 14px; height: 8px; }

/* outliner */
.outliner { min-width: 0; padding-top: 1px; background: repeating-linear-gradient(#282828 0 32px, #2b2b2b 32px 64px) 0 1px; color: #c8c8c8; }
.outliner ul ul { position: relative; }
.outliner ul ul::before { content: ""; position: absolute; left: 45px; top: 8px; bottom: 8px; width: 2px; background: #5e5e5e; }
.row { display: flex; align-items: center; height: 32px; padding-right: 17px; }
.l1 { padding-left: 32px; }
.l2 { padding-left: 64px; }
.selected { background: #334d80; }
.tri { display: flex; justify-content: center; width: 32px; padding-right: 3px; }
.down::before, .right::before { content: ""; width: 9px; height: 9px; background: #c8c8c8; clip-path: polygon(0 0, 100% 0, 50% 100%); }
.right::before { clip-path: polygon(0 0, 100% 50%, 0 100%); }
.obj, .data { display: flex; align-items: center; justify-content: center; width: 32px; height: 28px; border-radius: 7px; }
.active { background: #505050; box-shadow: inset 0 0 0 1px #6a6a6a; }
.selected .active { background: #5a6f99; box-shadow: inset 0 0 0 1px #6f82a6; }
.coll { width: 22px; height: 20px; color: #dcdcdc; margin-top: 2px; }
.orange { color: #c5834e; }
.name { padding: 5px 0 0 6px; }
.data { margin-left: 31px; color: #14b38a; }
.toggles { display: flex; align-items: center; gap: 13px; margin-left: auto; color: #e6e6e6; }
.toggles input { appearance: none; display: grid; width: 16px; height: 16px; margin-right: 1px; border-radius: 2px; background: #e6e6e6; }
.toggles input::before { content: ""; place-self: center; width: 11px; height: 6px; margin-bottom: 4px; border: solid #2b2b2b; border-width: 0 0 2px 2px; rotate: -45deg; }
.selected .toggles input::before { border-color: #334d80; }
.eye { width: 20px; height: 14px; }
.photo { width: 20px; height: 17px; }

/* markup drawn over the whole screen */
.note { position: absolute; left: 809px; top: 353px; color: #e51c1c; font: 200 52px/62px "DejaVu Sans Light", "DejaVu Sans", Lato, sans-serif; pointer-events: none; }
.note p { display: flex; gap: 20px; }
.markup { position: absolute; inset: 0; width: 100%; height: 100%; pointer-events: none; }
```
